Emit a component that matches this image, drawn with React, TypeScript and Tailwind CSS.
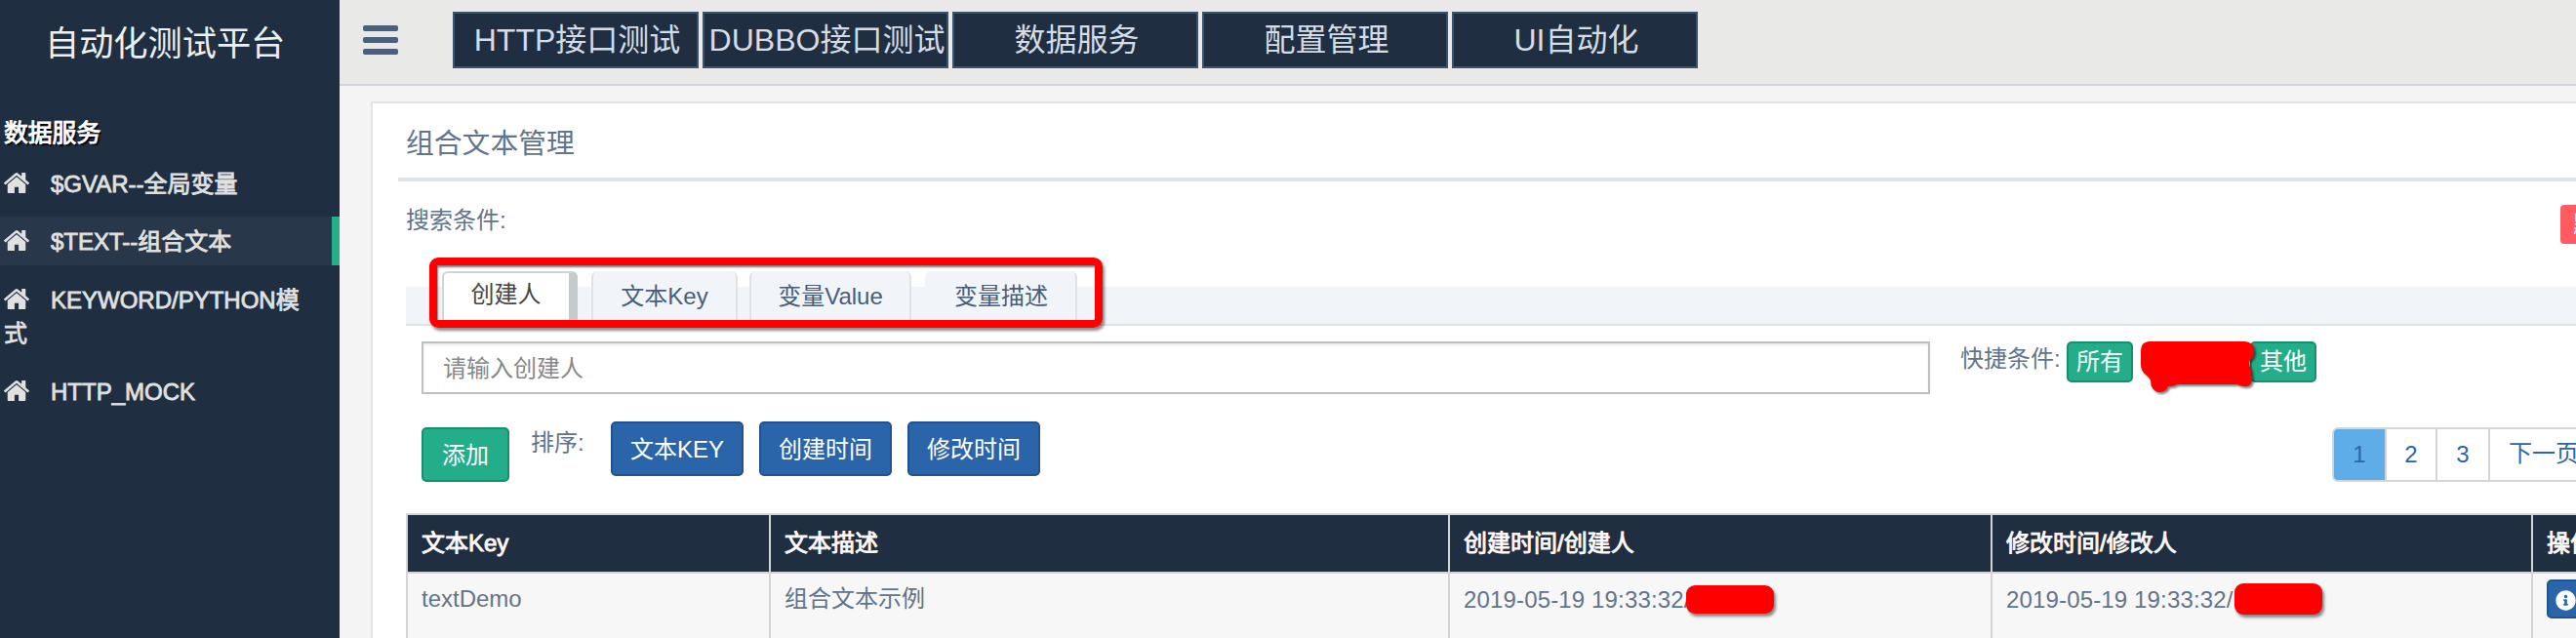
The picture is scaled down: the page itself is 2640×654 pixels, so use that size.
import type { ReactNode } from 'react';
import { FaInfoCircle } from 'react-icons/fa';

const navItems = ['HTTP接口测试', 'DUBBO接口测试', '数据服务', '配置管理', 'UI自动化'];

function HomeIcon() {
  return (
    <svg viewBox="24 250 1616 1290" fill="currentColor" preserveAspectRatio="none" className="mr-[22px] inline-block h-[21px] w-[26px] align-[-1px]">
      <path d="M1408 992v480q0 26-19 45t-45 19h-384v-384h-256v384h-384q-26 0-45-19t-19-45v-480q0-1 .5-3t.5-3l575-474 575 474q1 2 1 6zm223-69l-62 74q-8 9-21 11h-3q-13 0-21-7l-692-577-692 577q-12 8-24 7-13-2-21-11l-62-74q-8-10-7-23.5t11-21.5l719-599q32-26 76-26t76 26l244 204v-195q0-14 9-23t23-9h192q14 0 23 9t9 23v408l219 182q10 8 11 21.5t-7 23.5z" />
    </svg>
  );
}

function SideItem({ label, className }: { label: string; className: string }) {
  return (
    <li className={`relative pl-1 pr-8 leading-[34px] text-[#e1e1e1] [-webkit-text-stroke:0.8px_#e1e1e1] ${className}`}>
      <HomeIcon />
      {label}
    </li>
  );
}

function Sidebar() {
  return (
    <aside className="h-full w-[348px] shrink-0 bg-[#1f2f41]">
      <h1 className="pt-[19px] pl-[46px] text-[35.2px] leading-[52px] text-[#ecf0f1]">自动化测试平台</h1>
      <h2 className="mt-[49px] pl-1 text-[24.8px] leading-[34px] text-white [-webkit-text-stroke:0.9px_#fff] [text-shadow:2px_2px_1px_#000]">
        数据服务
      </h2>
      <ul className="mt-[18px]">
        <SideItem label="$GVAR--全局变量" className="h-[50px]" />
        <SideItem label="$TEXT--组合文本" className="h-[50px] border-r-8 border-[#23af88] bg-[#29374a] pt-[9px]" />
        <SideItem label="KEYWORD/PYTHON模式" className="h-[94px] pt-[19px]" />
        <SideItem label="HTTP_MOCK" className="pt-[19px]" />
      </ul>
    </aside>
  );
}

function Header() {
  return (
    <header className="flex h-[88px] items-start border-b-2 border-[#d0d5dc] bg-[#e9e9e7] pl-6">
      <div className="mt-[26px] flex w-9 flex-col gap-1.5">
        <span className="h-1.5 rounded-[2px] bg-[#485f7d]" />
        <span className="h-1.5 rounded-[2px] bg-[#485f7d]" />
        <span className="h-1.5 rounded-[2px] bg-[#485f7d]" />
      </div>
      <nav className="mt-3 ml-14 flex gap-1">
        {navItems.map((n) => (
          <a
            key={n}
            className="flex h-[58px] w-[252px] items-center justify-center border-2 border-[#3b526c] bg-[#1f2f41] pb-px pl-[3px] text-[32px] whitespace-nowrap text-[#d5dce6]"
          >
            {n}
          </a>
        ))}
      </nav>
    </header>
  );
}

function Tab({ children, className }: { children: ReactNode; className: string }) {
  return (
    <div className={`h-[54px] rounded-t-[6px] border-x-2 border-[#dfe3e8] bg-[#f1f4f9] text-center leading-[52px] text-[#465f7c] ${className}`}>
      {children}
    </div>
  );
}

function Tabs() {
  return (
    <div className="relative mt-[38px] ml-[34px] flex h-[56px] items-start">
      <div className="absolute inset-x-0 bottom-0 h-10 border-b-2 border-[#dfe2e8] bg-[#f1f4f9]" />
      <div className="relative flex pl-[37px]">
        <div className="mr-[14px] h-[54px] w-[139px] rounded-t-[6px] border-t-2 border-r-[9px] border-l-2 border-t-[#d3d3d3] border-r-[#c5cbcd] border-l-[#d3d3d3] bg-white pr-px text-center leading-[44px] text-[#444]">
          创建人
        </div>
        <Tab className="mr-3 w-[150px]">文本Key</Tab>
        <Tab className="mr-[14px] w-[166px]">变量Value</Tab>
        <Tab className="w-[156px] border-l-[#f1f4f9]">变量描述</Tab>
      </div>
      <div className="absolute -top-[14px] left-6 h-[72px] w-[690px] rounded-[9px] border-8 border-[#ff0000] shadow-[2px_3px_3px_rgba(0,0,0,0.45),inset_1px_2px_2px_rgba(0,0,0,0.5)]" />
    </div>
  );
}

function GreenTag({ children, className }: { children: ReactNode; className: string }) {
  return (
    <button className={`h-[42px] w-[68px] rounded-[5px] border-2 border-[#1a8f70] bg-[#23ad89] leading-[36px] text-white ${className}`}>
      {children}
    </button>
  );
}

function SearchRow() {
  return (
    <div className="mt-4 flex items-start pl-[50px]">
      <input
        className="h-[54px] w-[1546px] shrink-0 border-2 border-[#bfbfbf] bg-white px-5 pt-0.5 shadow-[inset_0_2px_2px_rgba(0,0,0,0.075)] placeholder:text-[#888]"
        placeholder="请输入创建人"
      />
      <span className="ml-[31px] w-[109px] shrink-0 pt-px leading-[34px] whitespace-nowrap">快捷条件:</span>
      <GreenTag className="shrink-0">所有</GreenTag>
      <div className="relative ml-2 w-[112px] shrink-0">
        <svg className="absolute top-0 left-0 z-10 h-[58px] w-[124px] drop-shadow-[2px_2px_1px_rgba(0,0,0,0.5)]" viewBox="0 0 124 58">
          <path
            d="M8 0H107Q116 1 116 9Q117 15 111 20Q110 24 113 29L114 38Q114 45 108 46Q102 46 99 44H37Q34 46 28 46Q26 52 18 52Q10 50 10 40Q8 36 5 34Q0 30 0 24V9Q0 1 8 0Z"
            fill="#ff0000"
          />
        </svg>
      </div>
      <GreenTag className="shrink-0">其他</GreenTag>
    </div>
  );
}

function BlueButton({ children }: { children: ReactNode }) {
  return (
    <button className="h-14 w-[136px] rounded-[5px] border-2 border-[#225292] bg-[#2a65aa] pt-px leading-[51px] whitespace-nowrap text-white">
      {children}
    </button>
  );
}

function Toolbar() {
  return (
    <div className="mt-7 flex h-[62px] items-start pl-[50px]">
      <button className="mt-1.5 h-14 w-[90px] rounded-[5px] border-2 border-[#1a8f70] bg-[#23ad89] pt-0.5 leading-[50px] text-white">添加</button>
      <span className="mt-[5px] ml-[22px] w-[82px] leading-[34px]">排序:</span>
      <div className="flex gap-4">
        <BlueButton>文本KEY</BlueButton>
        <BlueButton>创建时间</BlueButton>
        <BlueButton>修改时间</BlueButton>
      </div>
      <div className="mt-1.5 ml-[1324px] flex h-14 w-[300px] shrink-0 overflow-hidden rounded-l-[6px] border-2 border-[#d5d5d5] text-center leading-[52px] whitespace-nowrap text-[#2a65ad]">
        <span className="w-[54px] shrink-0 border-r-2 border-[#d5d5d5] bg-[#5eade9]">1</span>
        <span className="w-[52px] shrink-0 border-r-2 border-[#d5d5d5]">2</span>
        <span className="w-[54px] shrink-0 border-r-2 border-[#d5d5d5]">3</span>
        <span className="pl-[19px] leading-[50px]">下一页</span>
      </div>
    </div>
  );
}

const grid = 'grid grid-cols-[370px_694px_554px_552px_180px] gap-x-0.5';

function Table() {
  return (
    <div className="mt-8 ml-[34px] flex w-[2360px] flex-col gap-0.5 border-2 border-r-0 border-[#d3d5d5] bg-[#d3d5d5]">
      <div className={`${grid} h-[58px] leading-[58px] whitespace-nowrap text-[#fff9f9] *:bg-[#1f2f41] *:pl-[14px] [-webkit-text-stroke:0.9px_#fff9f9]`}>
        <div>文本Key</div>
        <div>文本描述</div>
        <div>创建时间/创建人</div>
        <div>修改时间/修改人</div>
        <div>操作</div>
      </div>
      <div className={`${grid} h-[80px] leading-[34px] whitespace-nowrap *:bg-[#f7f7f7] *:pl-[14px]`}>
        <div className="pt-[9px]">textDemo</div>
        <div className="pt-[9px]">组合文本示例</div>
        <div className="relative pt-2.5 tracking-[0.15px]">
          2019-05-19 19:33:32/
          <span className="absolute top-3 left-[242px] h-[29px] w-[90px] rounded-[9px] bg-[#ff0000] shadow-[2px_3px_3px_rgba(0,0,0,0.45)]" />
        </div>
        <div className="relative pt-2.5 tracking-[0.15px]">
          2019-05-19 19:33:32/
          <span className="absolute top-2.5 left-[248px] h-8 w-[90px] rounded-[9px] bg-[#ff0000] shadow-[2px_3px_3px_rgba(0,0,0,0.45)]" />
        </div>
        <div className="pt-1.5">
          <button className="flex h-10 w-[60px] items-center rounded-[5px] border-2 border-[#225292] bg-[#2a65aa] pt-0.5 pl-[7px] text-white">
            <FaInfoCircle className="size-[21px] shrink-0" />
          </button>
        </div>
      </div>
    </div>
  );
}

export default function App() {
  return (
    <div className="flex h-[654px] w-[2640px] overflow-hidden bg-[#f4f4f4] font-['Liberation_Sans','Noto_Sans_CJK_SC',sans-serif] text-[24px] text-[#62748c]">
      <Sidebar />
      <main className="min-w-0 flex-1 overflow-hidden">
        <Header />
        <section className="mt-4 ml-8 h-[700px] w-[2400px] border-2 border-[#dfe4e8] bg-white">
          <h3 className="mt-[20px] pl-[34px] text-[28.8px] leading-[42px]">组合文本管理</h3>
          <div className="mt-[14px] ml-[26px] h-1 bg-[#dfe4e8]" />
          <div className="mt-[22px] flex h-8 items-start pl-[34px]">
            <span className="w-[2208px] shrink-0 pt-px leading-[34px]">搜索条件:</span>
            <button className="mt-0.5 h-10 w-[100px] shrink-0 rounded-[4px] bg-[#ff5b61] pl-[13px] text-left leading-[38px] text-white">默认</button>
          </div>
          <Tabs />
          <SearchRow />
          <Toolbar />
          <Table />
        </section>
      </main>
    </div>
  );
}
